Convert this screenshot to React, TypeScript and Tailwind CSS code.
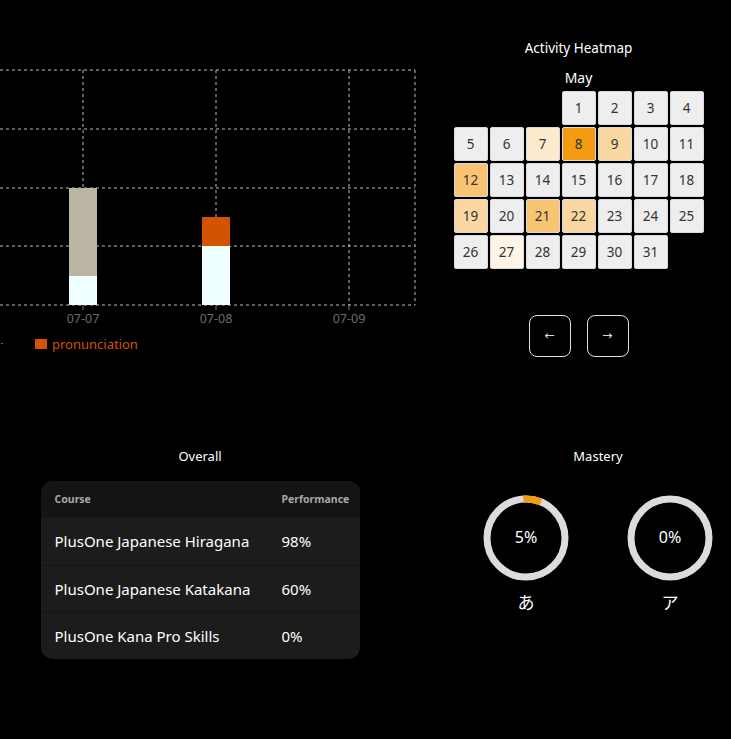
import React from "react";

const FONT = { fontFamily: '"Noto Sans", "Open Sans", "Noto Sans CJK JP", sans-serif' };

const heat: Record<number, string> = {
  7: "bg-[#fdebd0]",
  8: "bg-[#f39c12]",
  9: "bg-[#fad7a0]",
  12: "bg-[#f8c471]",
  19: "bg-[#fad7a0]",
  21: "bg-[#f8c471]",
  22: "bg-[#fad7a0]",
  27: "bg-[#fef5e7]",
};

function Chart() {
  const hs = [70, 129, 188, 246, 305];
  const vs = [83, 216, 349, 415];
  return (
    <svg width={430} height={360} className="block">
      {hs.map((y) => (
        <line key={y} x1={0} x2={415} y1={y} y2={y} stroke="#bdbdbd" strokeDasharray="3 3" strokeWidth={1} />
      ))}
      {vs.map((x) => (
        <line key={x} x1={x} x2={x} y1={70} y2={305} stroke="#bdbdbd" strokeDasharray="3 3" strokeWidth={1} />
      ))}
      {[83, 216, 349].map((x) => (
        <line key={x} x1={x} x2={x} y1={305} y2={310} stroke="#777" strokeWidth={1} />
      ))}
      <rect x={69} y={188} width={28} height={88} fill="#bbb5a4" />
      <rect x={69} y={276} width={28} height={29} fill="#f0ffff" />
      <rect x={202} y={217} width={28} height={29} fill="#d35400" />
      <rect x={202} y={246} width={28} height={59} fill="#f0ffff" />
      {[
        [83, "07-07"],
        [216, "07-08"],
        [349, "07-09"],
      ].map(([x, t]) => (
        <text key={t as string} x={x as number} y={323} textAnchor="middle" fontSize={12.5} fill="#6b6b6b">
          {t}
        </text>
      ))}
      <rect x={1} y={343} width={2} height={1} fill="#666" />
      <rect x={35} y={339} width={12} height={10} fill="#d35400" />
      <text x={52} y={349} fontSize={13} fill="#d35400">
        pronunciation
      </text>
    </svg>
  );
}

function Heatmap() {
  const cells: (number | null)[] = [null, null, null];
  for (let d = 1; d <= 31; d++) cells.push(d);
  return (
    <div className="flex flex-col items-center pt-[40px] pr-[4px]">
      <div className="text-[13.5px] text-white leading-[16px]">Activity Heatmap</div>
      <div className="text-[14px] text-white leading-[18px] mt-[13px]">May</div>
      <div className="grid grid-cols-[repeat(7,34px)] auto-rows-[34px] gap-[2px] mt-[4px]">
        {cells.map((d, i) =>
          d === null ? (
            <div key={i} />
          ) : (
            <div
              key={i}
              className={`flex items-center justify-center rounded-[2px] border border-[#d9d9d9] text-[13.5px] text-[#333] ${heat[d] ?? "bg-[#eeeeee]"}`}
            >
              {d}
            </div>
          )
        )}
      </div>
      <div className="flex gap-[16px] mt-[46px]">
        <button className="w-[42px] h-[42px] rounded-[8px] border border-[#e0e0e0] text-white text-[10px] flex items-center justify-center">
          ←
        </button>
        <button className="w-[42px] h-[42px] rounded-[8px] border border-[#e0e0e0] text-white text-[10px] flex items-center justify-center">
          →
        </button>
      </div>
    </div>
  );
}

function Ring({ pct, label }: { pct: number; label: string }) {
  const r = 39;
  const c = 2 * Math.PI * r;
  return (
    <div className="flex flex-col items-center">
      <div className="relative w-[86px] h-[86px]">
        <svg width={86} height={86} className="block">
          <circle cx={43} cy={43} r={r} fill="none" stroke="#dcdcdc" strokeWidth={7} />
          {pct > 0 && (
            <circle
              cx={43}
              cy={43}
              r={r}
              fill="none"
              stroke="#f39c12"
              strokeWidth={7}
              strokeDasharray={`${(c * pct) / 100 + 6} ${c}`}
              transform="rotate(-94 43 43)"
            />
          )}
        </svg>
        <div className="absolute inset-0 flex items-center justify-center text-white text-[16px] pb-[2px]">{pct}%</div>
      </div>
      <div className="text-white text-[17px] mt-[10px] leading-[24px]">{label}</div>
    </div>
  );
}

const rows = [
  ["PlusOne Japanese Hiragana", "98%"],
  ["PlusOne Japanese Katakana", "60%"],
  ["PlusOne Kana Pro Skills", "0%"],
];

export default function App() {
  return (
    <div className="w-[731px] h-[739px] bg-black overflow-hidden" style={FONT}>
      <div className="flex h-[440px]">
        <div className="w-[430px]">
          <Chart />
        </div>
        <div className="flex-1">
          <Heatmap />
        </div>
      </div>
      <div className="flex">
        <div className="w-[400px] flex flex-col items-center">
          <div className="text-white text-[13px] leading-[16px] mt-[8px]">Overall</div>
          <div className="mt-[17px] w-[319px] rounded-[12px] overflow-hidden bg-[#1c1c1c]">
            <div className="flex h-[37px] items-center bg-[#141414] text-[10.5px] font-bold text-[#a8a8a8]">
              <div className="w-[241px] pl-[14px]">Course</div>
              <div>Performance</div>
            </div>
            {rows.map(([n, p], i) => (
              <div
                key={n}
                className={`flex h-[47px] items-center text-white text-[15px] ${i > 0 ? "border-t border-[#141414]" : ""}`}
              >
                <div className="w-[241px] pl-[14px] whitespace-nowrap">{n}</div>
                <div>{p}</div>
              </div>
            ))}
          </div>
        </div>
        <div className="w-[266px] ml-[65px] flex flex-col items-center">
          <div className="text-white text-[13px] leading-[16px] mt-[8px]">Mastery</div>
          <div className="flex gap-[58px] mt-[31px]">
            <Ring pct={5} label="あ" />
            <Ring pct={0} label="ア" />
          </div>
        </div>
      </div>
    </div>
  );
}
